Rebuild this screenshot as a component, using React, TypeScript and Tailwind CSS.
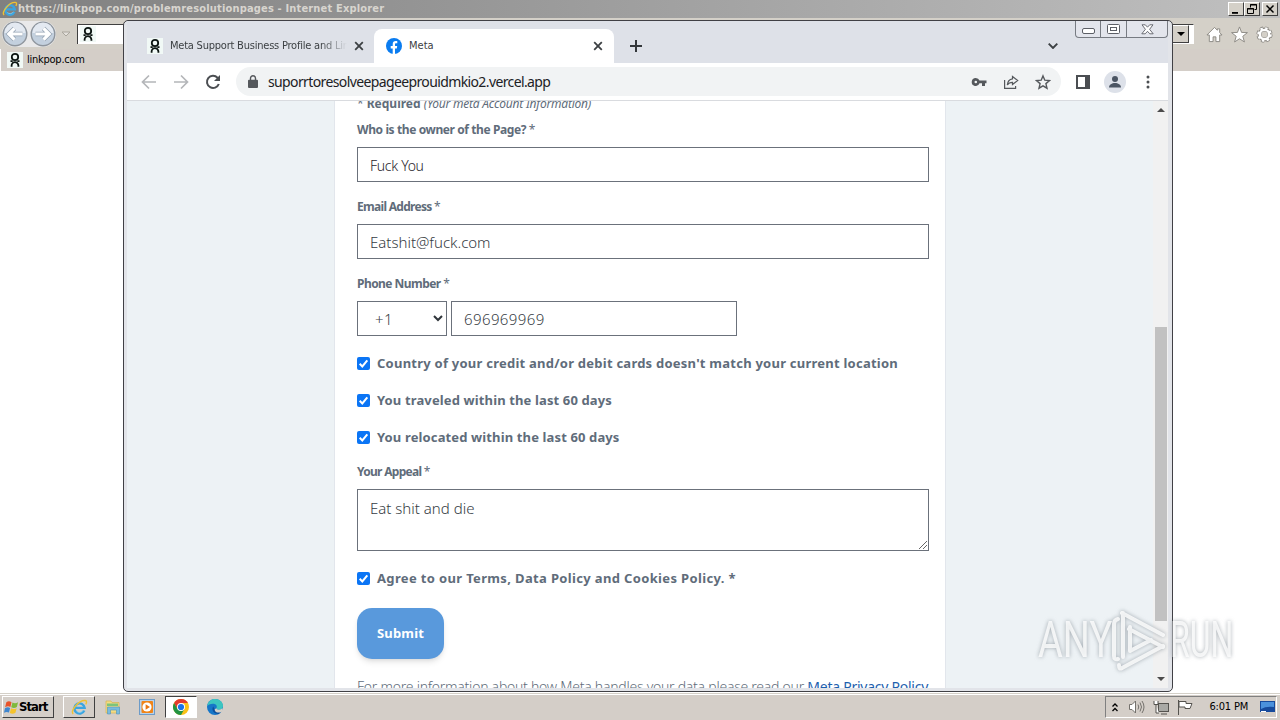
import { clsx } from "clsx";
import type { ReactNode } from "react";

const SANS = "font-['Noto_Sans','Open_Sans',sans-serif]";
const TAHOMA = "font-['DejaVu_Sans_Condensed','DejaVu_Sans',sans-serif]";

function LinkpopIcon() {
	return (
		<svg viewBox="0 0 16 16" className="size-4 shrink-0">
			<rect width="16" height="16" fill="#f1f9f6" />
			<g fill="none" stroke="#0c1512" strokeWidth="1.800">
				<circle cx="8" cy="5" r="3.200" />
				<path d="M3.500 9.100h2.200M10.300 9.100h2.200M4.600 14.700v-1.200a3.400 3.400 0 0 1 6.800 0v1.200" />
			</g>
		</svg>
	);
}

function IeIcon({ className }: { className?: string }) {
	return (
		<svg viewBox="0 0 18 18" className={clsx("shrink-0", className)} fill="none">
			<path d="M14 12.2A5.4 5.4 0 1 1 14.4 9.4H5" stroke="#3ba5e0" strokeWidth="2.6" />
			<path d="M13 12A4.6 4.6 0 0 1 6 13" stroke="#8ed4f5" strokeWidth="0.8" />
			<path d="M2.3 15.8C-.8 12.8 7.7 1.2 15 1.6c2 .2 1.6 2.4.6 4" stroke="#efc232" strokeWidth="1.5" />
		</svg>
	);
}

function FacebookIcon() {
	return (
		<svg viewBox="0 0 16 16" className="size-4 shrink-0">
			<circle cx="8" cy="8" r="8" fill="#0a7cf0" />
			<path
				fill="#fff"
				d="M6.7 16v-5.6h-2V8h2V6.4c0-2.2 1.1-3.3 3-3.3.8 0 1.4.1 1.6.2v2H10c-.8 0-1 .5-1 1.1V8h2.2l-.4 2.4H9V16z"
			/>
		</svg>
	);
}

function CloseIcon() {
	return (
		<svg viewBox="0 0 10 10" className="size-2.5 shrink-0" stroke="#3c4043" strokeWidth="1.8">
			<path d="M1.2 1.2l7.6 7.6M8.8 1.2L1.2 8.8" />
		</svg>
	);
}

function ChromeIcon() {
	return (
		<svg viewBox="0 0 16 16" className="size-4">
			<circle cx="8" cy="8" r="8" fill="#fbc116" />
			<path d="M8 4h6.93A8 8 0 0 0 1.07 4L4.5 10z" fill="#e33b2e" />
			<path d="M4.54 10L1.07 4A8 8 0 0 0 8 16l3.46-6z" fill="#229342" />
			<circle cx="8" cy="8" r="4" fill="#fff" />
			<circle cx="8" cy="8" r="3.1" fill="#1a73e8" />
		</svg>
	);
}

function EdgeIcon() {
	return (
		<svg viewBox="0 0 16 16" className="size-4">
			<circle cx="8" cy="8" r="8" fill="#1676c8" />
			<path d="M.2 7C1 2.6 4.300 0 8 0c5 0 8 3.500 8 6.700 0 2.500-2 4-4 4-1.800 0-3-.7-2.500-1.700C10.500 7 9 4.800 6 4.800 3 4.800 1 6 .2 7z" fill="#3cc5c0" />
			<path d="M6.200 7.500c-2.200 3 .5 7.500 5.300 7.500l3.200-2.500c-3 1.300-7 .6-7.300-2.700z" fill="#0d4f9c" />
			<path d="M9.500 9c-.5 1 .7 1.700 2.500 1.700 1.400 0 2.600-.6 3.300-1.600l.7 2.400-1.800 1.700c-3 1-6.200.2-6.600-2.800z" fill="#d6d0c8" />
		</svg>
	);
}

function FolderIcon() {
	return (
		<svg viewBox="0 0 16 16" className="size-4">
			<path d="M1 2h5l1 1.500h7V14H1z" fill="#f3dc83" stroke="#d4b254" strokeWidth=".7" />
			<path d="M2 4.500h11V7H2z" fill="#7cc47b" />
			<path d="M2.500 8h12v7h-3v-4h-6v4h-3z" fill="#79bbdf" stroke="#4b93bb" strokeWidth=".6" />
		</svg>
	);
}

function MediaIcon() {
	return (
		<svg viewBox="0 0 16 16" className="size-4">
			<rect x=".5" y=".5" width="15" height="15" fill="#b9d2ea" stroke="#6c9bc8" />
			<rect x="2.500" y="2" width="11.500" height="12" rx="1" fill="#f08418" />
			<circle cx="8" cy="8" r="4.600" fill="#fff" />
			<path d="M6.600 5.300L11 8l-4.400 2.700z" fill="#e97510" />
		</svg>
	);
}

function StartFlag() {
	return (
		<svg viewBox="0 0 16 16" className="size-[15px] shrink-0">
			<path d="M2.500 2.500C4.500 1 6 1.300 8 2.300L6.800 7.400C5 6.400 3.300 6.500 1.200 7.700z" fill="#e8532a" />
			<path d="M9 2.700c2 1 4 .9 6-.3L13.700 7.500c-2 1.200-4 1.200-6 .2z" fill="#7fb93c" />
			<path d="M1 8.800c2-1.200 3.700-1.300 5.500-.3L5.300 13.400C3.500 12.400 2 12.400 0 13.600z" fill="#3f86cf" />
			<path d="M7.500 8.900c2 1 3.900 1 6-.2l-1.300 5c-2 1.200-4 1.200-6 .2z" fill="#f5c32c" />
		</svg>
	);
}

function NavCircle({ flip }: { flip?: boolean }) {
	return (
		<svg viewBox="0 0 26 26" className={clsx("size-[26px]", flip && "-scale-x-100")}>
			<circle cx="13" cy="13" r="11.8" fill="#c3d0de" stroke="#8e959d" strokeWidth="1.400" />
			<path d="M2.500 12a10.500 10.500 0 0 1 21 0z" fill="#e3e9f1" />
			<path d="M20.500 13H7M12.500 7.300L6.800 13l5.700 5.700" fill="none" stroke="#95a3b3" strokeWidth="4.600" />
			<path d="M20.500 13H7M12.500 7.300L6.800 13l5.700 5.700" fill="none" stroke="#fff" strokeWidth="3.200" />
		</svg>
	);
}

function ClassicButton({ children, className }: { children: ReactNode; className?: string }) {
	return (
		<div
			className={clsx(
				"flex items-center justify-center border border-t-white border-r-[#404040] border-b-[#404040] border-l-white bg-[#d4d0c8]",
				className,
			)}
		>
			{children}
		</div>
	);
}

function IeWindow() {
	return (
		<div className="flex flex-1 flex-col bg-white">
			<div className="flex h-[18px] items-center bg-linear-to-r from-[#808080] to-[#c0c0c0] pr-[2px] pl-[2px]">
				<IeIcon className="size-4" />
				<span className={clsx(TAHOMA, "text-[11px] leading-4 font-bold tracking-[0.17px] whitespace-nowrap text-[#d8d5cf]")}>
					https://linkpop.com/problemresolutionpages - Internet Explorer
				</span>
				<div className="ml-auto flex">
					<ClassicButton className="h-3.5 w-4">
						<svg viewBox="0 0 10 10" className="size-2.5">
							<path d="M1 8h6v1.800H1z" />
						</svg>
					</ClassicButton>
					<ClassicButton className="h-3.5 w-4">
						<svg viewBox="0 0 10 10" className="size-2.5" fill="none" stroke="#000">
							<path d="M3.500 3.500v-3h6v5h-2M3 1h7M.5 4.500h6v5h-6zM0 5h7" />
						</svg>
					</ClassicButton>
					<ClassicButton className="ml-[2px] h-3.5 w-4">
						<svg viewBox="0 0 10 10" className="size-2.5" stroke="#000" strokeWidth="1.500">
							<path d="M1.500 1.500l7 7M8.500 1.500l-7 7" />
						</svg>
					</ClassicButton>
				</div>
			</div>
			<div className="flex h-[31px] items-center bg-[#d4d0c8] pl-[2px]">
				<div className="flex gap-[2px] rounded-full bg-[#e9e9ea]">
					<NavCircle />
					<NavCircle flip />
				</div>
				<svg viewBox="0 0 10 6" className="ml-[5px] h-[6px] w-2.5">
					<path d="M1 1h8L5 5z" fill="#e4e1dc" stroke="#aaa69d" />
				</svg>
				<div className="ml-1.5 flex h-5 flex-1 items-center border-t border-l border-[#404040] bg-white pl-0.5">
					<LinkpopIcon />
				</div>
				<div className="flex h-5 w-[22px] items-center border-t border-r border-b border-t-[#404040] border-r-white border-b-white bg-white">
					<ClassicButton className="mr-1 ml-auto h-[18px] w-[17px]">
						<svg viewBox="0 0 8 4" className="h-1 w-2">
							<path d="M0 0h8L4 4z" />
						</svg>
					</ClassicButton>
				</div>
				<div className="ml-3 flex gap-2 pt-0.5 pr-[7px]">
					<svg viewBox="0 0 18 18" className="size-[17px]" fill="#fff" stroke="#8b8883" strokeWidth="1">
						<path d="M9 1.500L1 9.500h2.500v7H7.500v-5h3v5h4v-7H17l-2.500-2.500V3h-2.500v1.500z" />
					</svg>
					<svg viewBox="0 0 18 18" className="size-[17px]" fill="#fff" stroke="#8b8883" strokeWidth="1">
						<path d="M9 1l2.200 5.800 6.200.2-4.900 3.900 1.700 6L9 13.500l-5.200 3.400 1.700-6L.6 7l6.200-.2z" />
					</svg>
					<svg viewBox="0 0 18 18" className="size-[17px]" fill="none">
						<circle cx="9" cy="9" r="6.800" stroke="#8b8883" strokeWidth="3.600" strokeDasharray="3.100 2.240" />
						<circle cx="9" cy="9" r="5.200" stroke="#8b8883" strokeWidth="4.200" />
						<circle cx="9" cy="9" r="6.500" stroke="#fff" strokeWidth="2.400" strokeDasharray="2.500 2.600" />
						<circle cx="9" cy="9" r="4.900" stroke="#fff" strokeWidth="2.600" />
						<circle cx="9" cy="9" r="2.400" fill="#d4d0c8" />
					</svg>
				</div>
			</div>
			<div className="flex h-[22px] items-center border-l border-white bg-[#d4cec8] pl-1.5">
				<LinkpopIcon />
				<span className={clsx(TAHOMA, "ml-1 text-[11px] tracking-[-0.25px] text-black")}>linkpop.com</span>
			</div>
		</div>
	);
}

function TabStrip() {
	return (
		<div className="flex h-[42px] items-end bg-[#dee1e8]">
			<div className="flex h-[34px] w-[247px] items-center pr-[10px] pl-[20px]">
				<LinkpopIcon />
				<span
					className={clsx(
						TAHOMA,
						"ml-[7px] w-[177px] overflow-hidden mask-r-from-85% text-[11px] tracking-[-0.22px] whitespace-nowrap text-[#3c4043]",
					)}
				>
					Meta Support Business Profile and Link
				</span>
				<span className="ml-auto">
					<CloseIcon />
				</span>
			</div>
			<div className="flex h-[34px] w-[240px] items-center rounded-t-lg bg-white pr-[11px] pl-3">
				<FacebookIcon />
				<span className={clsx(TAHOMA, "ml-[7px] text-[11px] text-[#3c4043]")}>Meta</span>
				<span className="ml-auto">
					<CloseIcon />
				</span>
			</div>
			<svg viewBox="0 0 12 12" className="mb-[11px] ml-4 size-3" stroke="#34373b" strokeWidth="2">
				<path d="M6 0v12M0 6h12" />
			</svg>
			<div className="ml-auto flex h-full w-[125px] flex-col">
				<div className="ml-8 flex h-[17px] w-[93px] divide-x divide-[#777b82] rounded-b border border-t-0 border-[#777b82] bg-[#e3e5ec]">
					<div className="flex w-[25px] items-center justify-center">
						<svg viewBox="0 0 13 6" className="mt-1 h-[6px] w-[13px]" fill="#fff" stroke="#5c5f66">
							<rect x=".5" y=".5" width="12" height="5" rx="1.500" />
						</svg>
					</div>
					<div className="flex w-[26px] items-center justify-center">
						<svg viewBox="0 0 13 11" className="h-[11px] w-[13px]" fill="#fff" stroke="#5c5f66">
							<rect x=".5" y=".5" width="12" height="9" rx="1" />
							<rect x="3.500" y="3.500" width="6" height="3" />
						</svg>
					</div>
					<div className="flex flex-1 items-center justify-center">
						<svg viewBox="0 0 13 11" className="h-[11px] w-[13px]" fill="#fff" stroke="#5c5f66" strokeWidth=".9">
							<path d="M1 .8h3.300l2.200 2.400L8.700.8H12L8.600 5.300l3.600 4.500H8.800L6.500 7.300 4.200 9.800H.8l3.600-4.500z" />
						</svg>
					</div>
				</div>
				<svg viewBox="0 0 10 6" className="mt-[5px] ml-[5px] h-[6px] w-2.5" fill="none" stroke="#3c4043" strokeWidth="1.900">
					<path d="M.7.700L5 5 9.300.700" />
				</svg>
			</div>
		</div>
	);
}

function Toolbar() {
	return (
		<div className="flex h-[38px] items-center border-b border-[#d9dbdf] bg-white pr-[18px] pl-[14px]">
			<div className="flex w-[95px] items-center gap-4">
				<svg viewBox="0 0 16 16" className="size-4" fill="none" stroke="#b4b6b9" strokeWidth="1.700">
					<path d="M15 8H2M8 1.500L1.500 8 8 14.500" />
				</svg>
				<svg viewBox="0 0 16 16" className="size-4" fill="none" stroke="#b4b6b9" strokeWidth="1.700">
					<path d="M1 8h13M8 1.500L14.500 8 8 14.500" />
				</svg>
				<svg viewBox="0 0 16 16" className="size-4" fill="none" stroke="#4b4e52" strokeWidth="2">
					<path d="M13.800 10A6.100 6.100 0 1 1 12.500 3.700L14 5.500" />
					<path d="M15 1v6H9z" fill="#4b4e52" stroke="none" />
				</svg>
			</div>
			<div className="flex h-[29px] w-[825px] items-center rounded-full bg-[#f1f3f4] pr-[10px] pl-3">
				<svg viewBox="0 0 10 13" className="h-[13px] w-2.5" fill="#55585c">
					<path d="M1 4.800h8a1 1 0 0 1 1 1V12a1 1 0 0 1-1 1H1a1 1 0 0 1-1-1V5.800a1 1 0 0 1 1-1z" />
					<path d="M2.500 5.500V3.300a2.500 2.500 0 0 1 5 0v2.200" fill="none" stroke="#55585c" strokeWidth="1.400" />
				</svg>
				<span className={clsx(SANS, "ml-[10px] text-[14px] tracking-[-0.62px] text-[#202124]")}>
					suporrtoresolveepageeprouidmkio2.vercel.app
				</span>
				<div className="ml-auto flex items-center gap-4">
					<svg viewBox="0 0 16 16" className="size-4" fill="#55585c">
						<path
							fillRule="evenodd"
							d="M4.800 4a4 4 0 1 0 3.700 5.300H11V12h3V9.300h1.500V6.600h-7A4 4 0 0 0 4.800 4zm0 2.700a1.300 1.300 0 1 1 0 2.600 1.300 1.300 0 0 1 0-2.600z"
						/>
					</svg>
					<svg viewBox="0 0 16 16" className="size-4" fill="none" stroke="#55585c" strokeWidth="1.200">
						<path d="M1.600 6v8.400h11V12" />
						<path d="M9.500 2.500l5.200 4-5.200 4V8.300c-2.500 0-4 .8-5.200 2.700.3-3.500 2-5.800 5.200-6.200z" />
					</svg>
					<svg viewBox="0 0 16 16" className="size-4" fill="none" stroke="#55585c" strokeWidth="1.400">
						<path d="M8 1.900l1.800 4.300 4.700.4-3.600 3 1.100 4.600L8 11.800l-4 2.400 1.100-4.600-3.600-3 4.700-.4z" />
					</svg>
				</div>
			</div>
			<svg viewBox="0 0 14 14" className="ml-[15px] size-3.5 shrink-0">
				<path d="M0 0h14v14H0zM2 2v10h7V2z" fill="#4b4e52" fillRule="evenodd" />
			</svg>
			<svg viewBox="0 0 22 22" className="ml-[14px] size-[22px] shrink-0">
				<circle cx="11" cy="11" r="11" fill="#dde1e9" />
				<circle cx="11" cy="8" r="3" fill="#4b5563" />
				<path d="M5 16.500c0-6 12-6 12 0z" fill="#4b5563" />
			</svg>
			<svg viewBox="0 0 4 14" className="ml-auto h-3.5 w-1 shrink-0" fill="#4b4e52">
				<circle cx="2" cy="2" r="1.500" />
				<circle cx="2" cy="7" r="1.500" />
				<circle cx="2" cy="12" r="1.500" />
			</svg>
		</div>
	);
}

function Label({ text, className }: { text: string; className?: string }) {
	return (
		<div className={clsx("h-5 text-[12px] leading-5 font-bold whitespace-nowrap", className)}>
			{text} <span className="font-normal">*</span>
		</div>
	);
}

function Field({ value, className }: { value: string; className?: string }) {
	return (
		<div className={clsx("flex h-[35px] items-center border border-[#6b717b] pl-3 whitespace-nowrap", className)}>
			{value}
		</div>
	);
}

function CheckRow({ children, className }: { children: ReactNode; className?: string }) {
	return (
		<div className="flex h-[37px] items-center">
			<svg viewBox="0 0 13 13" className="size-[13px] shrink-0">
				<rect width="13" height="13" rx="2" fill="#0b75f5" />
				<path d="M2.700 6.800l2.600 2.600 5-6" fill="none" stroke="#fff" strokeWidth="2" />
			</svg>
			<span className={clsx("ml-[7px] text-[13px] font-bold whitespace-nowrap", className)}>{children}</span>
		</div>
	);
}

function AppealForm() {
	return (
		<div className={clsx(SANS, "h-full w-[612px] border-x border-[#e2e6ec] bg-white pl-[22px] text-[#606c7a]")}>
			<div className="-mt-[7px] h-5 text-[12px] leading-5 whitespace-nowrap">
				* <b>Required</b> <i className="tracking-[-0.22px]">(Your meta Account Information)</i>
			</div>
			<Label text="Who is the owner of the Page?" className="mt-1.5 tracking-[-0.4px]" />
			<Field value="Fuck You" className="mt-[7px] w-[572px] pt-px text-[14px] font-light tracking-[-0.3px] text-[#1f242b]" />
			<Label text="Email Address" className="mt-[15px] tracking-[-0.7px]" />
			<Field value="Eatshit@fuck.com" className="mt-[7px] w-[572px] pt-0.5 text-[15px] font-light text-[#353b43]" />
			<Label text="Phone Number" className="mt-[15px] tracking-[-0.55px]" />
			<div className="mt-[7px] flex gap-1">
				<div className="flex h-[35px] w-[90px] items-center justify-between border border-[#6b717b] pt-0.5 pr-[3px] pl-[17px] text-[15px] font-light tracking-[0.4px] text-[#353b43]">
					+1
					<svg viewBox="0 0 10 7" className="mb-0.5 h-[7px] w-2.5" fill="none" stroke="#30353b" strokeWidth="2">
						<path d="M1 1l4 4 4-4" />
					</svg>
				</div>
				<Field value="696969969" className="w-[286px] pt-0.5 text-[15px] font-light tracking-[0.4px] text-[#353b43]" />
			</div>
			<div className="mt-[9px]">
				<CheckRow className="tracking-[0.24px]">
					Country of your credit and/or debit cards doesn't match your current location
				</CheckRow>
				<CheckRow className="tracking-[0.13px]">You traveled within the last 60 days</CheckRow>
				<CheckRow className="tracking-[0.13px]">You relocated within the last 60 days</CheckRow>
			</div>
			<Label text="Your Appeal" className="mt-1.5 tracking-[-0.7px]" />
			<div className="mt-[7px] flex h-[62px] w-[572px] border border-[#6b717b] pt-[7px] pl-3 text-[15px] font-light text-[#353b43]">
				Eat shit and die
				<svg viewBox="0 0 8 8" className="mt-auto mr-px mb-px ml-auto size-2" stroke="#555" strokeWidth=".9">
					<path d="M0 8l8-8M4 8l4-4" />
				</svg>
			</div>
			<div className="mt-[9px]">
				<CheckRow className="tracking-[0.35px]">Agree to our Terms, Data Policy and Cookies Policy. *</CheckRow>
			</div>
			<div className="mt-[11px] flex h-[51px] w-[87px] items-center justify-center rounded-[15px] bg-[#5999dc] text-[13px] font-bold tracking-[0.2px] text-white shadow-md">
				Submit
			</div>
			<div className="mt-4 h-6 text-[14px] leading-6 font-light tracking-[-0.25px] whitespace-nowrap">
				For more information about how Meta handles your data please read our{" "}
				<span className="font-normal text-[#1d5fae]">Meta Privacy Policy</span>
			</div>
		</div>
	);
}

function Scrollbar() {
	return (
		<div className="flex w-[15px] flex-col items-center bg-[#f1f1f1] py-[7px] pl-px">
			<svg viewBox="0 0 8 4" className="h-1 w-2" fill="#4b4b4b">
				<path d="M0 4h8L4 0z" />
			</svg>
			<div className="mt-[215px] h-[294px] w-3 bg-[#c1c1c1]" />
			<svg viewBox="0 0 8 4" className="mt-auto h-1 w-2" fill="#4b4b4b">
				<path d="M0 0h8L4 4z" />
			</svg>
		</div>
	);
}

function ChromeWindow() {
	return (
		<div className="absolute top-5 left-[123px] flex h-[672px] w-[1050px] flex-col rounded-[5px] border border-[#404045] bg-[#e2e4e9] pr-1 pb-[3px] pl-[3px]">
			<TabStrip />
			<Toolbar />
			<div className="flex min-h-0 flex-1 overflow-hidden bg-[#edf2f5]">
				<div className="flex flex-1 overflow-hidden pl-[207px]">
					<AppealForm />
				</div>
				<Scrollbar />
			</div>
		</div>
	);
}

function Watermark() {
	return (
		<div className="absolute top-[608px] left-[1038px] flex h-[64px] w-[196px] items-center justify-between text-white/80 drop-shadow-[0_0_2px_rgba(110,120,130,0.75)]">
			<span className="w-[66px] origin-left scale-x-[0.76] font-['Roboto',sans-serif] text-[50px] leading-none">ANY</span>
			<svg viewBox="0 0 58 64" className="h-[64px] w-[58px] shrink-0" fill="none" stroke="currentColor" strokeWidth="4">
				<path
					d="M14 5L55 27M15 5V49M22 19V43L43 32M21 21L55 39M14 60L55 38M10 11Q6 12 6 16V48Q6 52 10 51M14 60Q11 62 11 57"
					strokeLinejoin="round"
					strokeLinecap="round"
				/>
			</svg>
			<span className="w-[64px] origin-left scale-x-[0.64] font-['Roboto',sans-serif] text-[50px] leading-none">RUN</span>
		</div>
	);
}

function Taskbar() {
	return (
		<div className={clsx(TAHOMA, "flex h-[27px] items-center border-t border-[#d4d0c8] bg-[#d4cec8] pr-[3px] pl-[2px] shadow-[inset_0_1px_0_#fff]")}>
			<div className="flex h-[22px] w-[52px] items-center border border-t-white border-r-[#404040] border-b-[#404040] border-l-white pl-px">
				<StartFlag />
				<span className="text-[13px] font-bold tracking-[-1px] text-black">Start</span>
			</div>
			<div className="ml-[9px] flex h-[22px] w-8 items-center justify-center border border-t-white border-r-[#404040] border-b-[#404040] border-l-white">
				<IeIcon className="size-[17px]" />
			</div>
			<div className="flex w-[70px] items-center justify-between px-[10px]">
				<FolderIcon />
				<MediaIcon />
			</div>
			<div className="flex h-[22px] w-8 items-center justify-center border border-t-[#404040] border-r-white border-b-white border-l-[#404040] bg-white">
				<ChromeIcon />
			</div>
			<div className="ml-[10px]">
				<EdgeIcon />
			</div>
			<div className="ml-auto flex h-[22px] w-[172px] items-center border border-t-[#808080] border-r-white border-b-white border-l-[#808080] pr-px pl-[6px]">
				<svg viewBox="0 0 6 9" className="h-[9px] w-[6px]" fill="none" stroke="#000" strokeWidth="1.300">
					<path d="M.5 3.500L3 1l2.500 2.500M.5 8L3 5.500 5.500 8" />
				</svg>
				<svg viewBox="0 0 16 14" className="ml-[11px] h-3.5 w-4" fill="#fff" stroke="#74716c">
					<path d="M.5 4.500h2.500L6.500 1v12L3 9.500H.5z" />
					<path d="M9 4.500q1.500 2.500 0 5M11 2.500q3 4.500 0 9M13 1q4 6 0 12" fill="none" />
				</svg>
				<svg viewBox="0 0 16 15" className="ml-2 h-[15px] w-4" fill="#fff" stroke="#55534f">
					<rect x="5.500" y="3.500" width="10" height="8" fill="#a9a9a5" />
					<path d="M8 14h6M1 1v3.500h4V1M3 4.500V13h3" />
				</svg>
				<svg viewBox="0 0 16 15" className="ml-2 h-[15px] w-4" fill="#fff" stroke="#55534f">
					<path d="M1.500 0v15" />
					<path d="M2 1.500h7v2h6l-2 5H8v-1.500H2z" />
				</svg>
				<span className="ml-auto text-[11px] tracking-[-0.2px] whitespace-nowrap text-black">6:01 PM</span>
				<svg viewBox="0 0 15 12" className="ml-3 h-3 w-[15px]">
					<rect width="15" height="11" fill="#174a9c" />
					<path d="M1 1h13v5Q6 5 1 8z" fill="#4b91dc" />
					<path d="M1 10h5v1H1z" fill="#fff" />
				</svg>
			</div>
		</div>
	);
}

export default function App() {
	return (
		<div className="relative flex h-[720px] w-[1280px] flex-col overflow-hidden bg-white">
			<IeWindow />
			<Taskbar />
			<ChromeWindow />
			<Watermark />
		</div>
	);
}
